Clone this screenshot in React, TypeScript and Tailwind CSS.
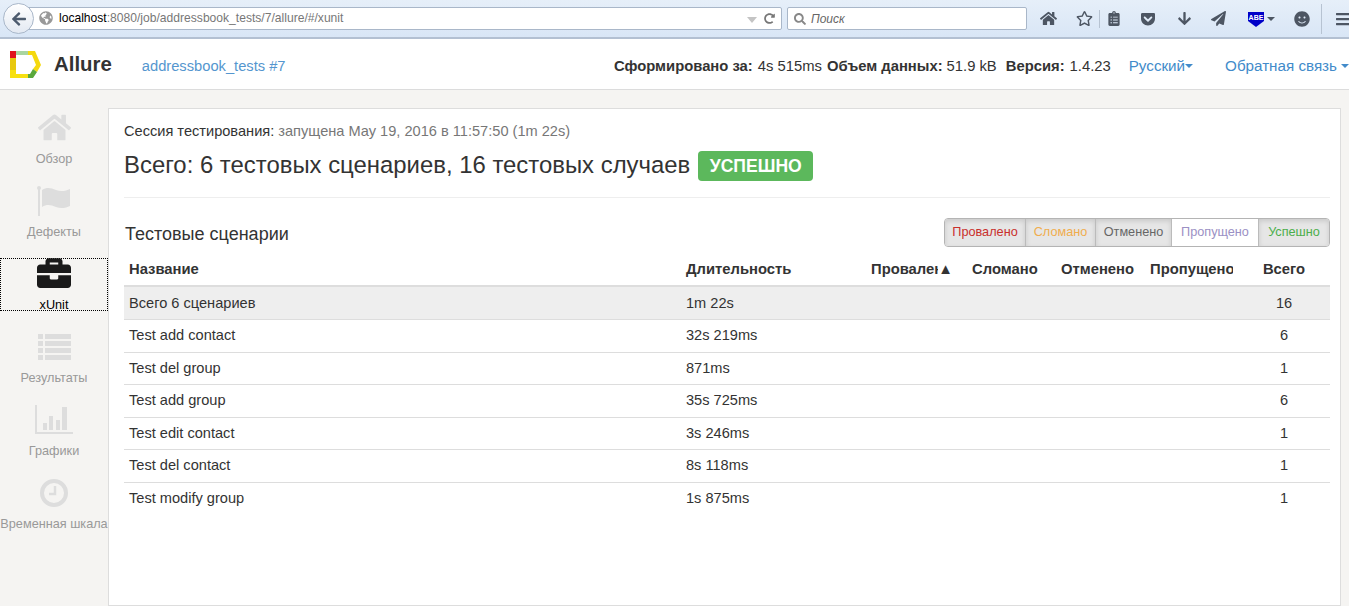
import { FaHome, FaBriefcase, FaArrowLeft, FaGlobeAmericas, FaRegStar, FaArrowDown, FaSmile, FaSearch, FaRedoAlt, FaClipboardList, FaPaperPlane, FaGetPocket, FaBars } from 'react-icons/fa';

const FONT = { fontFamily: '"Liberation Sans", Arial, sans-serif' };

function Logo() {
  return (
    <svg width="31" height="29" viewBox="0 0 31 29">
      <path d="M0 1H6V8H0Z" fill="#e0141c" />
      <path d="M6 1H18V5H6Z" fill="#a9d5a0" />
      <path d="M18 1H25L31 15L27 22L23 19L26 15L22 5H18Z" fill="#f5d90f" />
      <path d="M0 8H6V20H0Z" fill="#e8c80e" />
      <path d="M0 20H6V24H18V28H0Z" fill="#f7e011" />
      <path d="M23 19L27 22L23 28H18V24H20Z" fill="#5aa83c" />
    </svg>
  );
}

function FlagIcon() {
  return (
    <svg width="34" height="30" viewBox="0 0 34 30" fill="currentColor">
      <circle cx="2" cy="2" r="2" />
      <rect x="1" y="2" width="2" height="28" />
      <path d="M5 4C10 1 14 2 19 4C24 6 29 5 33 3V20C29 22 24 23 19 21C14 19 10 18 5 21Z" />
    </svg>
  );
}

function ListIcon() {
  return (
    <svg width="33" height="26" viewBox="0 0 33 26" fill="currentColor">
      {[0, 7, 14, 21].map((y) => (
        <g key={y}>
          <rect x="0" y={y} width="5" height="5" />
          <rect x="7" y={y} width="26" height="5" />
        </g>
      ))}
    </svg>
  );
}

function ChartIcon() {
  return (
    <svg width="38" height="29" viewBox="0 0 38 29" fill="currentColor">
      <rect x="0" y="0" width="2" height="29" />
      <rect x="0" y="27" width="38" height="2" />
      <rect x="8" y="18" width="4" height="7" />
      <rect x="14" y="11" width="4" height="14" />
      <rect x="21" y="15" width="4" height="10" />
      <rect x="27" y="2" width="5" height="23" />
    </svg>
  );
}

function ClockIcon() {
  return (
    <svg width="28" height="28" viewBox="0 0 28 28" fill="none" stroke="currentColor">
      <circle cx="14" cy="14" r="12" strokeWidth="4" />
      <path d="M15 7V15H9" strokeWidth="2.5" />
    </svg>
  );
}

const NAV = [
  { label: 'Обзор', icon: <FaHome size={33} /> },
  { label: 'Дефекты', icon: <FlagIcon /> },
];

const NAV_BOTTOM = [
  { label: 'Результаты', icon: <ListIcon /> },
  { label: 'Графики', icon: <ChartIcon /> },
  { label: 'Временная шкала', icon: <ClockIcon /> },
];

const ROWS = [
  ['Test add contact', '32s 219ms', '6'],
  ['Test del group', '871ms', '1'],
  ['Test add group', '35s 725ms', '6'],
  ['Test edit contact', '3s 246ms', '1'],
  ['Test del contact', '8s 118ms', '1'],
  ['Test modify group', '1s 875ms', '1'],
];

const FILTERS = [
  { label: 'Провалено', color: 'text-[#c9302c]', w: 'w-[81px]', on: false },
  { label: 'Сломано', color: 'text-[#f0ad4e]', w: 'w-[70px]', on: false },
  { label: 'Отменено', color: 'text-[#666]', w: 'w-[76px]', on: false },
  { label: 'Пропущено', color: 'text-[#9b90c4]', w: 'w-[87px]', on: true },
  { label: 'Успешно', color: 'text-[#4cae4c]', w: 'w-[70px]', on: false },
];

function BrowserBar() {
  return (
    <div className="flex h-[39px] items-center border-b-2 border-[#b3c0d2] bg-gradient-to-b from-[#e6eff9] to-[#d9e6f6]">
      <div className="relative ml-[3px] flex h-[31px] w-[1024px] shrink-0 items-center">
        <div className="ml-[17px] flex h-[23px] w-[762px] shrink-0 items-center rounded-[2px] border border-[#a9b7c9] bg-white pl-[38px]">
          <span className="text-[12.1px] text-[#777]">
            <span className="text-black">localhost</span>:8080/job/addressbook_tests/7/allure/#/xunit
          </span>
        </div>
        <div className="absolute left-0 top-0 flex h-[31px] w-[31px] items-center justify-center rounded-full border border-[#a9b7c9] bg-gradient-to-b from-white to-[#e3e9f2] text-[#4d5b6e]">
          <FaArrowLeft size={16} />
        </div>
        <FaGlobeAmericas size={14} className="absolute left-[36px] top-[8px] text-[#999]" />
        <span className="absolute left-[744px] top-[14px] h-0 w-0 border-x-[5px] border-t-[6px] border-x-transparent border-t-[#c4c4c4]" />
        <FaRedoAlt size={11} className="absolute left-[761px] top-[10px] text-[#777]" />
        <div className="absolute left-[784px] top-[4px] flex h-[23px] w-[240px] items-center gap-[5px] rounded-[2px] border border-[#a9b7c9] bg-white pl-[6px]">
          <FaSearch size={12} className="text-[#888]" />
          <span className="text-[12px] italic text-[#666]">Поиск</span>
        </div>
      </div>
      <div className="flex min-w-0 flex-1 items-center overflow-hidden text-[#4d5663] [&>*]:shrink-0">
        <FaHome size={17} className="ml-[13px]" />
        <FaRegStar size={17} className="ml-[19px]" />
        <span className="ml-[6px] h-[18px] w-px bg-[#b7c3d2]" />
        <FaClipboardList size={15} className="ml-[7px] w-[14px]" />
        <FaGetPocket size={16} className="ml-[19px]" />
        <FaArrowDown size={15} className="ml-[21px]" />
        <FaPaperPlane size={15} className="ml-[19px]" />
        <svg width="16" height="16" viewBox="0 0 16 16" className="ml-[22px]">
          <path d="M0 1H16V10L8 16L0 10Z" fill="#0000c8" />
          <text x="8" y="9" fontSize="7" fontWeight="700" fill="#fff" textAnchor="middle">ABE</text>
        </svg>
        <span className="ml-[3px] h-0 w-0 border-x-[4px] border-t-[4px] border-x-transparent border-t-[#4d5663]" />
        <FaSmile size={16} className="ml-[19px]" />
        <span className="ml-[11px] h-[30px] w-px bg-[#b7c3d2]" />
        <FaBars size={16} className="ml-[13px]" />
      </div>
    </div>
  );
}

function Header() {
  return (
    <div className="flex h-[51px] items-center border-b border-[#dcdcdc] bg-white pl-[10px] text-[#333]">
      <Logo />
      <span className="ml-[13px] text-[20.4px] font-bold leading-none text-[#333]">Allure</span>
      <span className="ml-[30px] mt-[5px] text-[14.7px] text-[#428bca] opacity-90">addressbook_tests #7</span>
      <div className="ml-auto mt-[5px] flex items-center text-[14.8px]">
        <b>Сформировано за:</b>
        <span className="ml-[5px]">4s 515ms</span>
        <b className="ml-[5px]">Объем данных:</b>
        <span className="ml-[4px]">51.9 kB</span>
        <b className="ml-[9px]">Версия:</b>
        <span className="ml-[5px]">1.4.23</span>
        <span className="ml-[18px] flex items-center text-[15.2px] text-[#428bca]">
          Русский
          <span className="h-0 w-0 border-x-[4px] border-t-[4px] border-x-transparent border-t-[#428bca]" />
        </span>
        <span className="ml-[32px] flex items-center text-[15.2px] text-[#428bca]">
          Обратная связь
          <span className="ml-[4px] h-0 w-0 border-x-[4px] border-t-[4px] border-x-transparent border-t-[#428bca]" />
        </span>
      </div>
    </div>
  );
}

function Sidebar() {
  return (
    <div className="w-[108px] shrink-0 pt-px text-center text-[12.7px] text-[#999]">
      {NAV.map((item) => (
        <div key={item.label} className="flex h-[73px] flex-col items-center">
          <span className="flex h-[37px] items-center text-[#ddd]">{item.icon}</span>
          <span className="mt-[4px]">{item.label}</span>
        </div>
      ))}
      <div className="mt-[3px] flex h-[53px] flex-col items-center border border-dotted border-black text-black">
        <FaBriefcase size={34} className="mt-[-3px] text-[#1a1a1a]" />
        <span className="mb-[-3px] mt-auto leading-[16px]">xUnit</span>
      </div>
      <div className="mt-[17px]">
        {NAV_BOTTOM.map((item) => (
          <div key={item.label} className="flex h-[73px] flex-col items-center whitespace-nowrap">
            <span className="flex h-[37px] items-center text-[#ddd]">{item.icon}</span>
            <span className="mt-[4px]">{item.label}</span>
          </div>
        ))}
      </div>
    </div>
  );
}

export default function App() {
  return (
    <div style={FONT} className="flex h-[606px] w-[1349px] flex-col overflow-hidden bg-[#f5f4f2]">
      <BrowserBar />
      <Header />
      <div className="flex min-h-0 flex-1 pt-[18px]">
        <Sidebar />
        <div className="mr-[8px] flex-1 border border-[#ddd] bg-white pl-[15px] pr-[10px] pt-[14px] text-[#333]">
          <p className="text-[14.6px] leading-[17px] text-[#777]">
            <span className="text-[#333]">Сессия тестирования:</span> запущена May 19, 2016 в 11:57:50 (1m 22s)
          </p>
          <div className="mt-[9px] flex items-center">
            <h1 className="text-[23.9px] leading-[30px] text-[#333]">Всего: 6 тестовых сценариев, 16 тестовых случаев</h1>
            <span className="ml-[8px] mt-[2px] flex h-[30px] w-[115px] items-center justify-center rounded-[4px] bg-[#5cb85c] text-[17.6px] font-bold text-white">
              УСПЕШНО
            </span>
          </div>
          <div className="mt-[16px] h-px bg-[#eee]" />
          <div className="mt-[20px] flex h-[29px] items-center justify-between">
            <h2 className="ml-px mt-[4px] text-[18px] text-[#333]">Тестовые сценарии</h2>
            <div className="flex h-[29px] overflow-hidden rounded-[4px] border border-[#b4b4b4] text-[12.7px]">
              {FILTERS.map((f) => (
                <span
                  key={f.label}
                  className={`flex items-center justify-center border-r border-[#bbb] last:border-r-0 ${f.w} ${f.color} ${
                    f.on ? 'bg-white' : 'bg-[#e6e6e6] shadow-[inset_0_2px_5px_rgba(0,0,0,0.13)]'
                  }`}
                >
                  {f.label}
                </span>
              ))}
            </div>
          </div>
          <table className="mt-[7px] w-[1206px] table-fixed border-collapse text-[14.6px]">
            <colgroup>
              <col className="w-[557px]" />
              <col className="w-[185px]" />
              <col className="w-[101px]" />
              <col className="w-[89px]" />
              <col className="w-[89px]" />
              <col className="w-[93px]" />
              <col className="w-[92px]" />
            </colgroup>
            <thead>
              <tr className="h-[32px] border-b-2 border-[#ddd] text-left text-[14.8px] font-bold">
                <th className="px-[5px]">Название</th>
                <th className="px-[5px]">Длительность</th>
                <th className="whitespace-nowrap px-[5px]">
                  <span className="inline-flex w-[82px]">
                    <span className="w-[69px] overflow-hidden">Провалено</span>▲
                  </span>
                </th>
                <th className="px-[5px]">Сломано</th>
                <th className="px-[5px]">Отменено</th>
                <th className="whitespace-nowrap px-[5px]">
                  <span className="block w-[83px] overflow-hidden">Пропущено</span>
                </th>
                <th className="px-[5px] text-center">Всего</th>
              </tr>
            </thead>
            <tbody>
              <tr className="h-[33.5px] border-b border-[#ddd] bg-[#eee]">
                <td className="px-[5px] pt-px">Всего 6 сценариев</td>
                <td className="px-[5px] pt-px">1m 22s</td>
                <td colSpan={4} />
                <td className="px-[5px] pt-px text-center">16</td>
              </tr>
              {ROWS.map(([name, time, total]) => (
                <tr key={name} className="h-[32.5px] border-b border-[#ddd] last:border-b-0">
                  <td className="px-[5px] pt-px">{name}</td>
                  <td className="px-[5px] pt-px">{time}</td>
                  <td colSpan={4} />
                  <td className="px-[5px] pt-px text-center">{total}</td>
                </tr>
              ))}
            </tbody>
          </table>
        </div>
      </div>
    </div>
  );
}
